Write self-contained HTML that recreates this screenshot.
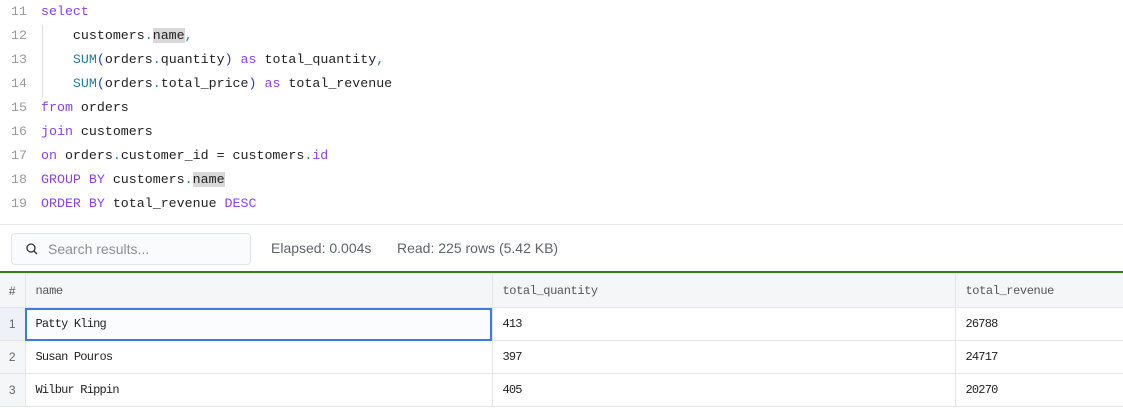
<!DOCTYPE html>
<html><head><style>
body{margin:0;width:1123px;height:419px;background:#fff;overflow:hidden;position:relative;font-family:"Liberation Sans",sans-serif;}
.code{position:absolute;left:0;top:0;width:1123px;height:224px;border-bottom:1px solid #e5e7eb;font-family:"Liberation Mono",monospace;font-size:13.3px;}
.ln{position:absolute;left:0;width:27px;text-align:right;color:#9a9a9a;}
.cl{position:absolute;left:41px;color:#222;white-space:pre;}
.k{color:#8b3ff0}.f{color:#1b7f95}.p{color:#1b42c9}.hl{background:#d8d8d8}
.guide{position:absolute;left:42px;top:25px;height:72px;border-left:1px solid #ddd;}
.search{position:absolute;left:11px;top:233px;width:238px;height:30px;border:1px solid #e2e5ea;border-radius:4px;background:#fafbfc;}
.search span{position:absolute;left:36px;top:7px;font-size:14px;color:#8b8f96;}
.stat{position:absolute;top:240px;font-size:14px;color:#5f6368;}
.green{position:absolute;left:0;top:271px;width:1123px;height:2px;background:#3d7a1f;}
table{position:absolute;left:0;top:273px;width:1123px;table-layout:fixed;border-collapse:collapse;font-family:"Liberation Mono",monospace;font-size:12px;letter-spacing:-0.8px;}
td{border:1px solid #e3e5e8;padding:0 0 0 10px;color:#222;overflow:hidden;white-space:nowrap;}
tr.h td{background:#f5f6f8;color:#555;height:33px;letter-spacing:-0.4px;}
tr.r td{height:32px;}
td.n{padding:0;text-align:center;background:#f5f6f8;color:#666;font-family:"Liberation Sans",sans-serif;letter-spacing:0 !important;font-size:12px;border-left:none;}
td.sel{outline:2px solid #3a7de0;outline-offset:-2px;background:#fbfcfe}
</style></head><body>
<div class="code">
<div class="guide"></div>
<div class="ln" style="top:4px">11</div><div class="cl" style="top:4px"><span class="k">select</span></div>
<div class="ln" style="top:28px">12</div><div class="cl" style="top:28px">    customers<span class="f">.</span><span class="hl">name</span><span class="f">,</span></div>
<div class="ln" style="top:52px">13</div><div class="cl" style="top:52px">    <span class="f">SUM</span><span class="p">(</span>orders<span class="f">.</span>quantity<span class="p">)</span> <span class="k">as</span> total_quantity<span class="f">,</span></div>
<div class="ln" style="top:76px">14</div><div class="cl" style="top:76px">    <span class="f">SUM</span><span class="p">(</span>orders<span class="f">.</span>total_price<span class="p">)</span> <span class="k">as</span> total_revenue</div>
<div class="ln" style="top:100px">15</div><div class="cl" style="top:100px"><span class="k">from</span> orders</div>
<div class="ln" style="top:124px">16</div><div class="cl" style="top:124px"><span class="k">join</span> customers</div>
<div class="ln" style="top:148px">17</div><div class="cl" style="top:148px"><span class="k">on</span> orders<span class="f">.</span>customer_id = customers<span class="f">.</span><span class="k">id</span></div>
<div class="ln" style="top:172px">18</div><div class="cl" style="top:172px"><span class="k">GROUP BY</span> customers<span class="f">.</span><span class="hl">name</span></div>
<div class="ln" style="top:196px">19</div><div class="cl" style="top:196px"><span class="k">ORDER BY</span> total_revenue <span class="k">DESC</span></div>
</div>
<div class="search"><svg style="position:absolute;left:14px;top:9px" width="12" height="12" viewBox="0 0 12 12"><circle cx="5" cy="5" r="4" fill="none" stroke="#333" stroke-width="1.3"/><path d="M8 8l3 3" stroke="#333" stroke-width="1.3"/></svg><span>Search results...</span></div>
<div class="stat" style="left:271px">Elapsed: 0.004s</div>
<div class="stat" style="left:397px">Read: 225 rows (5.42 KB)</div>
<div class="green"></div>
<table>
<colgroup><col style="width:25px"><col style="width:467px"><col style="width:463px"><col style="width:168px"></colgroup>
<tr class="h"><td class="n">#</td><td>name</td><td>total_quantity</td><td>total_revenue</td></tr>
<tr class="r"><td class="n" style="background:#eef2f8">1</td><td class="sel">Patty Kling</td><td>413</td><td>26788</td></tr>
<tr class="r"><td class="n">2</td><td>Susan Pouros</td><td>397</td><td>24717</td></tr>
<tr class="r"><td class="n">3</td><td>Wilbur Rippin</td><td>405</td><td>20270</td></tr>
</table>
</body></html>
